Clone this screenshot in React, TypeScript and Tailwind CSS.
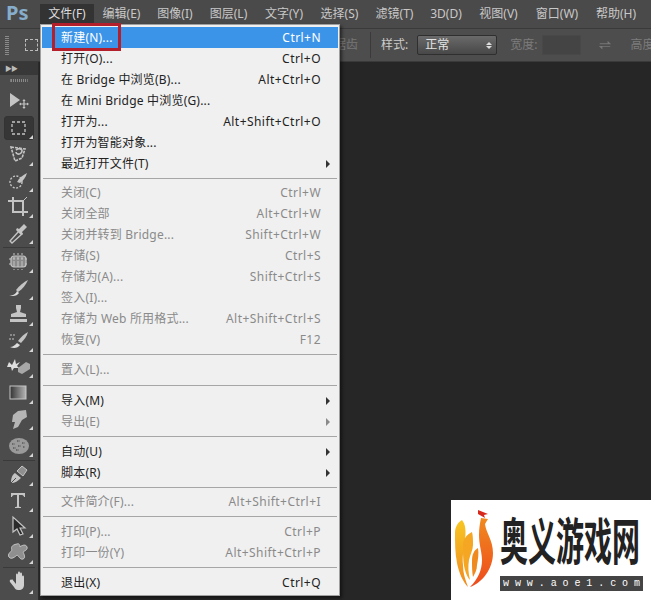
import React from "react";

const ui = { fontFamily: '"Noto Sans", "Noto Sans CJK SC", sans-serif' };

const topMenus: [string, string][] = [
  ["文件(F)", "w-[54px]"],
  ["编辑(E)", "w-[55px]"],
  ["图像(I)", "w-[52px]"],
  ["图层(L)", "w-[55px]"],
  ["文字(Y)", "w-[56px]"],
  ["选择(S)", "w-[55px]"],
  ["滤镜(T)", "w-[55px]"],
  ["3D(D)", "w-[48px]"],
  ["视图(V)", "w-[57px]"],
  ["窗口(W)", "w-[60px]"],
  ["帮助(H)", "w-[58px]"],
];

type Row = { l?: string; r?: string; off?: boolean; arrow?: boolean; hi?: boolean; sep?: string };
const rows: Row[] = [
  { l: "新建(N)...", r: "Ctrl+N", hi: true },
  { l: "打开(O)...", r: "Ctrl+O" },
  { l: "在 Bridge 中浏览(B)...", r: "Alt+Ctrl+O" },
  { l: "在 Mini Bridge 中浏览(G)..." },
  { l: "打开为...", r: "Alt+Shift+Ctrl+O" },
  { l: "打开为智能对象..." },
  { l: "最近打开文件(T)", arrow: true },
  { sep: "h-[8px]" },
  { l: "关闭(C)", r: "Ctrl+W", off: true },
  { l: "关闭全部", r: "Alt+Ctrl+W", off: true },
  { l: "关闭并转到 Bridge...", r: "Shift+Ctrl+W", off: true },
  { l: "存储(S)", r: "Ctrl+S", off: true },
  { l: "存储为(A)...", r: "Shift+Ctrl+S", off: true },
  { l: "签入(I)...", off: true },
  { l: "存储为 Web 所用格式...", r: "Alt+Shift+Ctrl+S", off: true },
  { l: "恢复(V)", r: "F12", off: true },
  { sep: "h-[9px]" },
  { l: "置入(L)...", off: true },
  { sep: "h-[10px]" },
  { l: "导入(M)", arrow: true },
  { l: "导出(E)", arrow: true, off: true },
  { sep: "h-[9px]" },
  { l: "自动(U)", arrow: true },
  { l: "脚本(R)", arrow: true },
  { sep: "h-[8px]" },
  { l: "文件简介(F)...", r: "Alt+Shift+Ctrl+I", off: true },
  { sep: "h-[9px]" },
  { l: "打印(P)...", r: "Ctrl+P", off: true },
  { l: "打印一份(Y)", r: "Alt+Shift+Ctrl+P", off: true },
  { sep: "h-[9px]" },
  { l: "退出(X)", r: "Ctrl+Q" },
];

const c = "#c4c4c4";
const icons: React.ReactNode[] = [
  <g key="move"><path d="M3 3l10 7-10 7z" fill={c} /><path d="M17 10v8M13 14h8" stroke={c} strokeWidth="1.2" /><path d="M17 9l-1.6 2h3.2zM17 19l-1.6-2h3.2zM12 14l2-1.6v3.2zM22 14l-2-1.6v3.2z" fill={c} /></g>,
  <rect key="m" x="5" y="6" width="13" height="12" fill="none" stroke={c} strokeWidth="1.3" strokeDasharray="3 2" />,
  <g key="lasso" fill="none" stroke={c} strokeWidth="1.6"><path d="M4 5l14 2-3 9-7 3z" strokeDasharray="3 1" /><path d="M9 8c4-3 8 0 5 3-2 2-5 1-5-1" /></g>,
  <g key="qs"><circle cx="9" cy="13" r="6" fill="none" stroke={c} strokeWidth="1.4" strokeDasharray="2 1.5" /><path d="M10 13c2-4 6-7 10-9-1 4-4 8-7 10z" fill={c} /></g>,
  <g key="crop" fill="none" stroke={c} strokeWidth="2"><path d="M6 2v15h15" /><path d="M1 6h15v15" /><path d="M16 6l4-4" strokeWidth="1" /></g>,
  <g key="drop"><path d="M3 20l9-10 3 3-10 9z" fill="none" stroke={c} strokeWidth="1.4" /><path d="M12 8l5-5 3 3-5 5 1 2-2 1-5-5 1-2z" fill={c} /></g>,
  <g key="heal"><rect x="4" y="6" width="15" height="11" rx="3" fill="#8a8a8a" stroke={c} strokeWidth="1.2" /><path d="M7 3v17M11 3v17M15 3v17M2 9h19M2 14h19" stroke={c} strokeWidth="1" strokeDasharray="2 2" /></g>,
  <g key="brush"><path d="M9 14c3-4 8-8 12-10-2 4-5 9-10 12z" fill={c} /><path d="M2 19c4 1 7-1 8-4l2 2c-2 3-6 4-10 2z" fill="#dcdcdc" /></g>,
  <g key="stamp" fill={c}><path d="M9 2h5v3l-1 4 6 2v3H4v-3l6-2-1-4z" /><rect x="3" y="16" width="17" height="3" /></g>,
  <g key="hist"><path d="M11 12c3-4 6-7 10-9-1 4-4 8-7 11z" fill={c} /><path d="M3 18c3 0 5-2 7-4l3 2c-2 3-6 4-10 2z" fill="#dcdcdc" /><path d="M3 6h6M2 10h5" stroke={c} strokeDasharray="2 1" /></g>,
  <g key="eraser"><path d="M2 7l3 3 3-6 1 5 4-2-3 4 2 2-5 0-2 3-1-4-4 0z" fill="#dedede" /><path d="M11 13l8-6 4 2v5l-8 5-4-2z" fill="#a8a8a8" /></g>,
  <g key="grad"><defs><linearGradient id="g1"><stop offset="0" stopColor="#333" /><stop offset="1" stopColor="#b5b5b5" /></linearGradient></defs><rect x="3" y="5" width="16" height="13" fill="url(#g1)" stroke={c} /></g>,
  <path key="smudge" d="M6 8l5-4 8-1 1 7-5 3-4 7-5 2 2-7-3 0z" fill="#b5b5b5" />,
  <g key="sponge"><ellipse cx="12" cy="12" rx="10" ry="8" fill="#9a9a9a" /><path d="M5 10h3M10 7h3M15 9h3M6 14h3M11 12h3M16 13h2M9 16h3" stroke="#5a5a5a" strokeWidth="1.4" strokeDasharray="1.5 1" /></g>,
  <g key="pen"><path d="M4 20c0-5 1-8 4-10l6 5c-3 3-6 5-10 5z" fill={c} /><path d="M10 8l5-5 5 4-4 6z" fill="#8f8f8f" stroke={c} /><path d="M4 20l5-5" stroke="#4f4e4e" /></g>,
  <path key="t" d="M4 4h14v4h-1c0-1-1-2-2-2h-3v11c0 1 1 1 2 1v1H8v-1c1 0 2 0 2-1V6H7C6 6 5 7 5 8H4z" fill={c} />,
  <g key="arrow"><path d="M6 2v15l4-3 3 6 3-1-3-6h5z" fill="#2a2a2a" stroke={c} strokeWidth="1.2" /></g>,
  <path key="shape" d="M10 3c2-1 3 1 3 3 2-2 6-3 7 0s-3 4-4 5c1 2 3 6 0 7s-4-3-6-4c-2 2-6 5-8 2s2-5 3-7c-1-2-1-5 5-6z" fill="#8f8f8f" stroke={c} strokeWidth="1" />,
  <path key="hand" d="M5 9l4 5V5c0-2 2-2 2 0v4-6c0-2 2-2 2 0v6-5c0-2 2-2 2 0v6-3c0-2 2-2 2 0v8c0 3-2 5-5 5H11c-2 0-3-1-4-3l-4-5c-1-2 1-3 2-2z" fill="#d0d0d0" />,
  <g key="zoom" fill="none" stroke={c} strokeWidth="2"><circle cx="10" cy="10" r="6" /><path d="M15 15l6 6" /></g>,
];
const groups = [6, 8, 4, 2];

function Tool({ icon, tri = true }: { icon: React.ReactNode; tri?: boolean }) {
  return (
    <div className="relative flex h-[26.2px] w-[38px] shrink-0 items-center justify-center">
      <svg width="24" height="24" viewBox="0 0 24 24" className="shrink-0">{icon}</svg>
      {tri && <span className="absolute bottom-[2px] right-[5px] h-0 w-0 border-b-[4px] border-l-[4px] border-b-[#d5d5d5] border-l-transparent" />}
    </div>
  );
}

function Toolbar() {
  let k = 0;
  return (
    <aside className="flex w-[39px] shrink-0 flex-col overflow-hidden border-r border-[#2b2b2b] bg-[#4d4c4c]">
      <div className="flex h-[13px] shrink-0 items-center bg-[#393838] pl-[5px] text-[7px] leading-none tracking-[-1px] text-[#bbbbbb]">▶▶</div>
      <div className="mx-[10px] mt-[4px] h-[3px] shrink-0 border-x border-[#777] bg-[repeating-linear-gradient(90deg,#8a8a8a_0,#8a8a8a_1px,transparent_1px,transparent_2px)]" />
      <div className="h-[7px] shrink-0" />
      {groups.map((n, gi) => (
        <div key={gi} className="flex shrink-0 flex-col">
          {Array.from({ length: n }).map((_, i) => {
            const idx = k++;
            return idx === 1 ? (
              <div key={idx} className="relative flex h-[26.2px] shrink-0 items-center justify-center">
                <div className="absolute inset-x-[4px] inset-y-[1px] rounded-[3px] border border-[#333] bg-[#363636]" />
                <div className="relative"><Tool icon={icons[idx]} /></div>
              </div>
            ) : (
              <Tool key={idx} icon={icons[idx]} tri={idx !== 0 && idx !== 19} />
            );
          })}
          {gi < groups.length - 1 && <div className="mx-[3px] my-[1px] h-[1px] shrink-0 bg-[#3a3a3a]" />}
        </div>
      ))}
    </aside>
  );
}

function FileMenu() {
  return (
    <div className="absolute left-[40px] top-[24px] w-[300px] border border-[#a0a0a0] bg-[#f0f0f0] px-[1px] pb-[2px] pt-[2px] text-[12px] shadow-[2px_2px_3px_rgba(0,0,0,0.5)]" style={ui}>
      {rows.map((r, i) =>
        r.sep ? (
          <div key={i} className={`flex items-center ${r.sep}`}><div className="mx-[1px] h-[1px] w-full bg-[#a6a6a6]" /></div>
        ) : (
          <div
            key={i}
            className={`flex h-[21px] items-center justify-between pl-[19px] pr-[17px] tracking-[0.2px] ${r.hi ? "bg-[#3c94e8] text-white" : r.off ? "text-[#8a8a8a]" : "text-[#222222]"}`}
          >
            <span className="whitespace-nowrap">{r.l}</span>
            {r.r && <span className="whitespace-nowrap tracking-[0.45px]">{r.r}</span>}
            {r.arrow && <span className={`-mr-[9px] h-0 w-0 border-y-[4px] border-l-[4px] border-y-transparent ${r.off ? "border-l-[#8a8a8a]" : "border-l-[#333]"}`} />}
          </div>
        )
      )}
    </div>
  );
}

function Watermark() {
  return (
    <div className="absolute bottom-0 right-0 flex h-[100px] w-[200px] items-start gap-[5px] bg-white pl-[4px] pt-[10px]">
      <svg width="40" height="80" viewBox="0 0 40 80" className="shrink-0">
        <defs>
          <linearGradient id="ph" x1="0" y1="0" x2="0" y2="1"><stop offset="0" stopColor="#f08a1f" /><stop offset="1" stopColor="#ee4a1c" /></linearGradient>
          <linearGradient id="ph2" x1="0" y1="0" x2="0" y2="1"><stop offset="0" stopColor="#f7c623" /><stop offset="1" stopColor="#f08a1f" /></linearGradient>
        </defs>
        <path d="M23 0l10 4-4 1 1 3-7-4z" fill="#d8281c" />
        <path d="M26 8l7 1-3 5c1 9 8 16 8 29 0 16-11 30-23 34 8-8 12-17 12-27 0-8-3-15-3-25 0-7 1-12 2-17z" fill="url(#ph)" />
        <path d="M7 10c-5 3-7 8-7 13 0 10 0 20 2 30 2 10 6 19 11 24-3-8-5-14-5-22-1-9 1-17 2-25 1-8 1-15-3-20z" fill="url(#ph2)" />
        <path d="M17 22c-6 3-9 8-9 13 0 10 0 17 2 25 1 4 3 8 5 10-2-8-2-14-1-20 1-5 4-10 4-15 0-5 0-9-1-13z" fill="#f5a623" />
        <path d="M23 38c-4 2-6 7-6 12 0 7 0 12 1 17 2-4 4-7 4-12 1-6 2-11 1-17z" fill="#f08a1f" />
      </svg>
      <div className="flex w-[143px] flex-col">
        <div className="flex h-[56px] items-center overflow-visible">
          <div className="origin-center scale-y-[1.8] whitespace-nowrap text-[28px] font-bold leading-[30px] text-[#222222]" style={{ fontFamily: '"Noto Sans CJK SC", sans-serif' }}>奥义游戏网</div>
        </div>
        <div className="mt-[10px] flex h-[15px] items-center justify-between bg-[#444444] px-[3px] text-[10px] leading-none text-white" style={{ fontFamily: '"Liberation Mono", monospace' }}>
          {"www.aoe1.com".split("").map((ch, i) => <span key={i}>{ch}</span>)}
        </div>
      </div>
    </div>
  );
}

export default function App() {
  return (
    <div className="relative flex h-[600px] w-[651px] flex-col overflow-hidden bg-[#262626] text-[12px]" style={ui}>
      <header className="flex h-[28px] shrink-0 items-start bg-[#4b4a4a] pl-[40px] pt-[4px] text-[#c8c8c8]">
        {topMenus.map(([t, w], i) => (
          <span key={t} className={`flex h-[20px] items-center justify-center whitespace-nowrap ${w} ${i === 0 ? "bg-[#333333] text-[#dddddd]" : ""}`}>{t}</span>
        ))}
        <span className="absolute left-[6px] top-[0px] text-[20px] font-bold leading-[26px] text-[#86adcb]">Ps</span>
      </header>
      <div className="flex h-[34px] shrink-0 items-center border-y border-[#3a3a3a] bg-[#4e4d4d] text-[#cccccc]">
        <div className="ml-[5px] h-[20px] w-[4px] shrink-0 bg-[repeating-linear-gradient(0deg,#8a8a8a_0,#8a8a8a_1px,transparent_1px,transparent_2px)]" />
        <div className="ml-[16px] h-[12px] w-[13px] shrink-0 border border-dashed border-[#bbbbbb]" />
        <span className="ml-[296px] shrink-0 whitespace-nowrap text-[#777777]">锯齿</span>
        <div className="ml-[12px] h-[26px] w-[1px] shrink-0 bg-[#3a3a3a]" />
        <span className="ml-[10px] shrink-0 whitespace-nowrap">样式:</span>
        <div className="ml-[9px] flex h-[20px] w-[80px] shrink-0 items-center justify-between rounded-[2px] border border-[#2f2f2f] bg-gradient-to-b from-[#6a6a6a] to-[#484848] pl-[7px] pr-[4px] text-[#e4e4e4]">
          正常
          <span className="flex flex-col gap-[1px]">
            <span className="h-0 w-0 border-x-[3px] border-b-[3px] border-x-transparent border-b-[#dddddd]" />
            <span className="h-0 w-0 border-x-[3px] border-t-[3px] border-x-transparent border-t-[#dddddd]" />
          </span>
        </div>
        <span className="ml-[13px] shrink-0 whitespace-nowrap text-[#7c7c7c]">宽度:</span>
        <div className="ml-[5px] h-[20px] w-[39px] shrink-0 border border-[#484848] bg-[#444444]" />
        <svg width="14" height="14" viewBox="0 0 16 14" className="ml-[17px] shrink-0"><path d="M2 5h9V2l4 4H2zM14 9H5v3L1 8h13z" fill="#777777" /></svg>
        <span className="ml-[18px] shrink-0 whitespace-nowrap text-[#7c7c7c]">高度</span>
      </div>
      <div className="flex min-h-0 flex-1">
        <Toolbar />
        <main className="flex-1 bg-[#262626]" />
      </div>
      <FileMenu />
      <div className="absolute left-[52px] top-[23px] h-[28px] w-[69px] border-[3px] border-[#b3202c]" />
      <Watermark />
    </div>
  );
}
